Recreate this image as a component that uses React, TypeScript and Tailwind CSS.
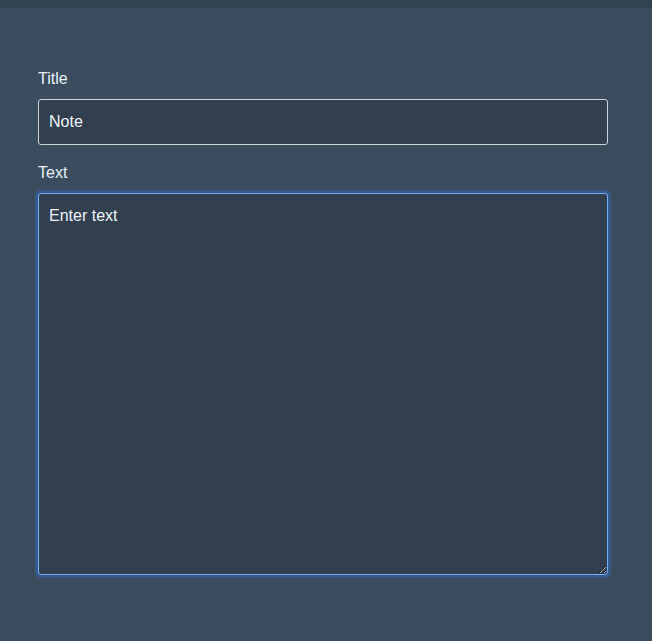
import React from "react";

export default function App() {
  return (
    <div className="min-h-[641px] w-full bg-[#3a4c5d] font-['Liberation_Sans',Arial,sans-serif]">
      <div className="h-2 w-full bg-[#324252]" />
      <div className="px-[38px] pt-[59px]">
        <label className="block text-base leading-6 text-[#e9f1fa]">Title</label>
        <input
          className="mt-[8px] block h-[46px] w-[570px] rounded-[3px] border border-[#cfd4da] bg-[#313f4f] px-[10px] text-base text-[#eef3f8] outline-none placeholder:text-[#eef3f8]"
          placeholder="Note"
        />
        <label className="mt-[16px] block text-base leading-6 text-[#e9f1fa]">Text</label>
        <textarea
          className="mt-[8px] block h-[382px] w-[570px] rounded-[3px] border border-[#74aef5] bg-[#313f4f] px-[10px] pt-[11px] pb-[10px] text-base leading-[22px] text-[#eef3f8] shadow-[0_0_0_3px_rgba(50,100,170,0.6)] outline-none placeholder:text-[#eef3f8]"
          placeholder="Enter text"
        />
      </div>
    </div>
  );
}
